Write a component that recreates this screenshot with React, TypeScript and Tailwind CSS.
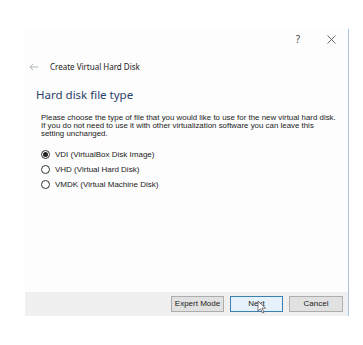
import React from "react";

const segoe = { fontFamily: '"Noto Sans", "Open Sans", sans-serif' };
const tahoma = { fontFamily: '"Liberation Sans", Arial, sans-serif' };

const Radio = ({ checked, label }: { checked?: boolean; label: string }) => (
  <div className="flex items-center h-[15px]">
    <span className="w-[9px] h-[9px] rounded-full border border-[#333] bg-white flex items-center justify-center">
      {checked && <span className="w-[5px] h-[5px] rounded-full bg-[#222]" />}
    </span>
    <span className="ml-[5px] text-[8px] text-[#222]">{label}</span>
  </div>
);

const Cursor = () => (
  <svg width="10" height="14" viewBox="0 0 10 14" className="absolute left-[26px] top-[3px]">
    <path d="M1 1 L1 11 L3.5 8.8 L5.5 13 L7 12.3 L5 8.2 L8.5 8.2 Z" fill="#fff" stroke="#555" strokeWidth="0.8" />
  </svg>
);

const App = () => {
  return (
    <div className="w-[363px] h-[345px] bg-white pt-[29px] pl-[25px]">
      <div className="w-[324px] h-[287px] bg-[#fdfdfd] border-r border-[#a9c4de] flex flex-col" style={segoe}>
        <div className="flex justify-end items-center h-[20px] pr-[12px] text-[#444]">
          <span className="text-[10px] mr-[27px]">?</span>
          <svg width="9" height="9" viewBox="0 0 9 9">
            <path d="M0.5 0.5 L8.5 8.5 M8.5 0.5 L0.5 8.5" stroke="#555" strokeWidth="0.9" />
          </svg>
        </div>
        <div className="flex items-center mt-[12px] pl-[4px] h-[12px]">
          <svg width="10" height="8" viewBox="0 0 10 8">
            <path d="M9 4 H1 M4 1 L1 4 L4 7" stroke="#9aa" strokeWidth="0.8" fill="none" />
          </svg>
          <span className="ml-[11px] text-[8px] text-[#222]">Create Virtual Hard Disk</span>
        </div>
        <div className="mt-[14px] pl-[11px] text-[11.5px] text-[#29406b] leading-[16px]">Hard disk file type</div>
        <div className="mt-[11px] pl-[16px] pr-[6px] text-[#222]" style={tahoma}>
          <p className="text-[7.9px] leading-[8px]">
            Please choose the type of file that you would like to use for the new virtual hard disk.
            <br />
            If you do not need to use it with other virtualization software you can leave this
            <br />
            setting unchanged.
          </p>
          <div className="mt-[9px] flex flex-col">
            <Radio checked label="VDI (VirtualBox Disk Image)" />
            <Radio label="VHD (Virtual Hard Disk)" />
            <Radio label="VMDK (Virtual Machine Disk)" />
          </div>
        </div>
        <div className="flex-1" />
        <div
          className="h-[24px] bg-[#f0f0f0] flex items-center justify-end gap-[6px] pr-[5px] text-[8px] text-[#222]"
          style={tahoma}
        >
          <button className="w-[53px] h-[16px] bg-[#e1e1e1] border border-[#adadad]">Expert Mode</button>
          <button className="relative w-[53px] h-[16px] bg-[#e5f1fb] border border-[#3c7fb1]">
            Next
            <Cursor />
          </button>
          <button className="w-[54px] h-[16px] bg-[#e1e1e1] border border-[#adadad]">Cancel</button>
        </div>
      </div>
    </div>
  );
};

export default App;
